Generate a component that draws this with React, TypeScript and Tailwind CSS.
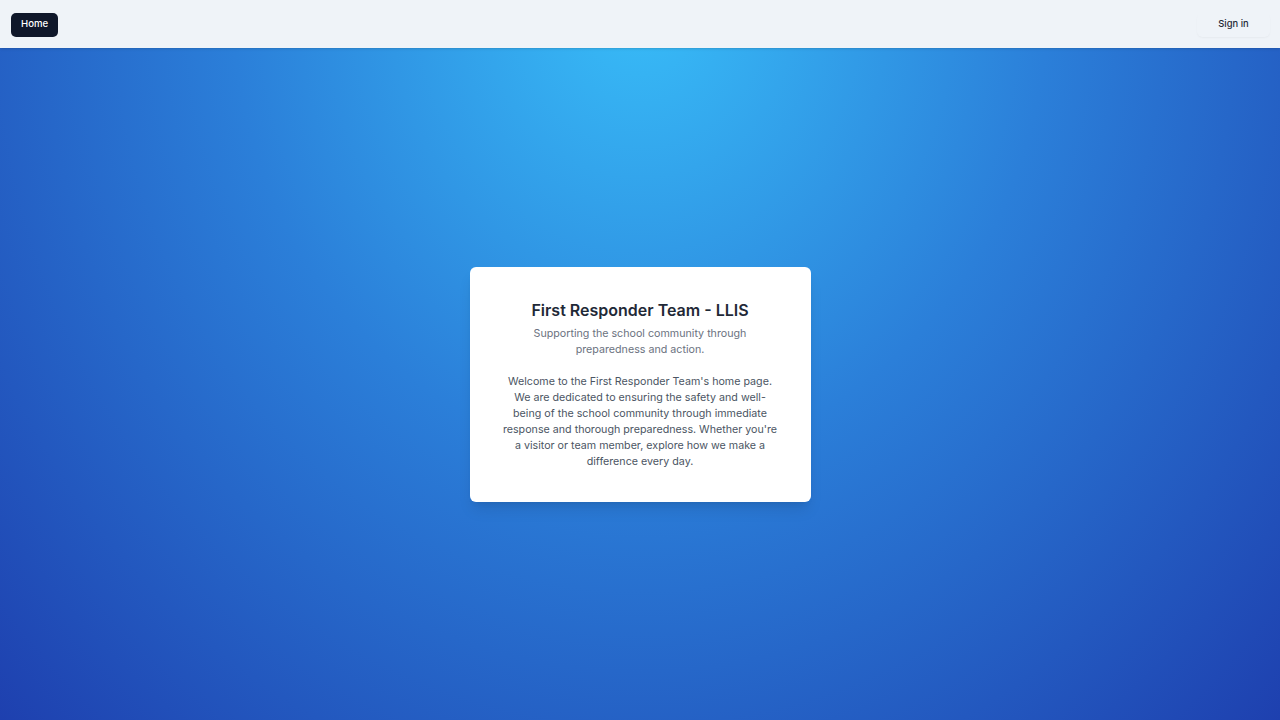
export default function App() {
  return (
    <div
      className="flex min-h-screen flex-col bg-[radial-gradient(ellipse_at_top,_#38bdf8_0%,_#2b7fd9_45%,_#1e40af_100%)]"
      style={{ fontFamily: "Inter, 'Noto Sans', sans-serif" }}
    >
      <header className="flex h-12 items-center justify-between bg-[#eff3f8] px-[10px] shadow-sm">
        <button className="ml-px mt-px h-6 rounded-[5px] bg-[#0f172a] px-[10px] text-[9.6px] font-medium text-white">
          Home
        </button>
        <button className="mt-px h-6 w-[73px] rounded-md text-[9.4px] font-medium text-[#1f2937] shadow-[0_1px_2px_rgba(0,0,0,0.04)]">
          Sign in
        </button>
      </header>

      <main className="flex flex-1 items-center justify-center">
        <div className="w-[341px] rounded-md bg-white px-8 pb-8 pt-8 text-center shadow-lg">
          <h1 className="text-[16px] font-semibold leading-[22px] text-[#1f2937]">
            First Responder Team - LLIS
          </h1>
          <p className="mt-[5px] text-[10.7px] leading-4 text-[#6b7280]">
            Supporting the school community through preparedness and action.
          </p>
          <p className="mt-4 text-[10.7px] leading-4 text-[#4b5563]">
            Welcome to the First Responder Team's home page. We are dedicated to ensuring the safety and
            well-being of the school community through immediate response and thorough preparedness.
            Whether you're a visitor or team member, explore how we make a difference every day.
          </p>
        </div>
      </main>
    </div>
  );
}
